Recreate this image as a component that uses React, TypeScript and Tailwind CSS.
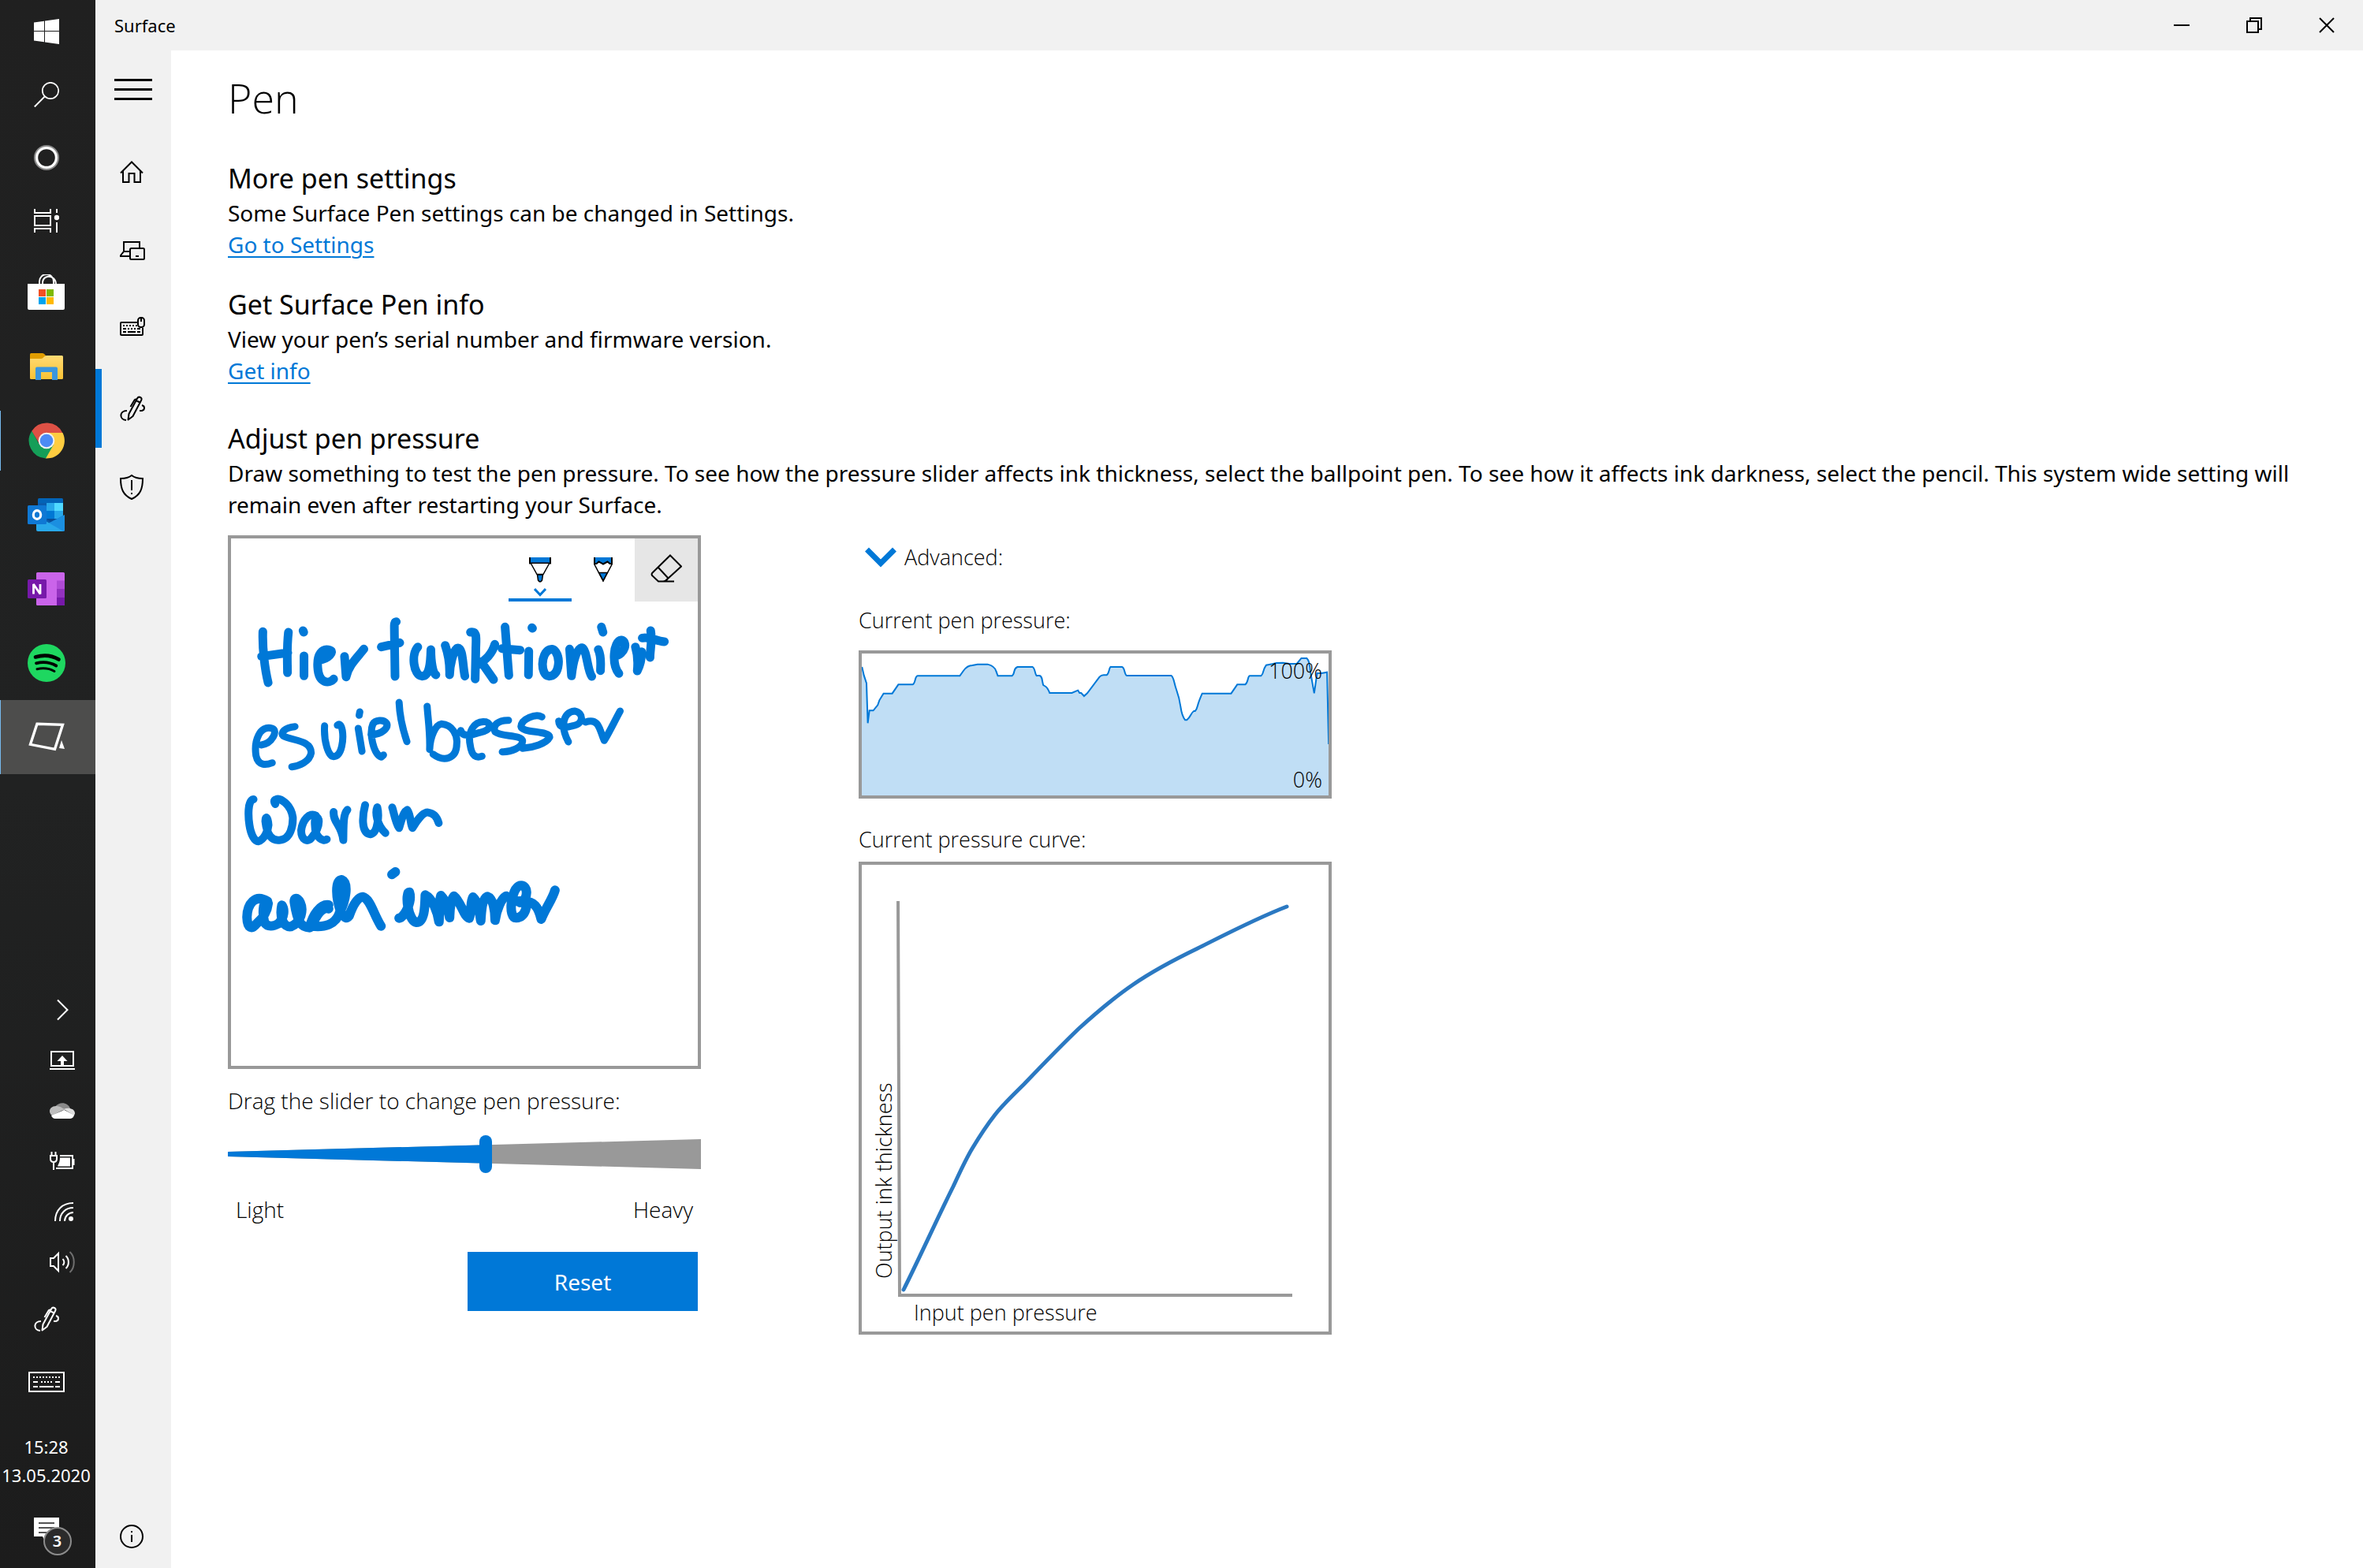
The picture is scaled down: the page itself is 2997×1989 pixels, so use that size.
import { useState } from "react";
import type { ReactNode } from "react";

type IconProps = {
  w: number;
  h: number;
  children: ReactNode;
};

function Icon({ w, h, children }: IconProps) {
  return (
    <svg
      width={w}
      height={h}
      viewBox={`0 0 ${w} ${h}`}
      fill="none"
      stroke="currentColor"
      strokeWidth={2}
      aria-hidden="true"
    >
      {children}
    </svg>
  );
}

/* ---------- Taskbar icons ---------- */

const WindowsIcon = () => (
  <Icon w={32} h={32}>
    <path
      stroke="none"
      fill="currentColor"
      d="M0 4.6 13 2.7V15H0zM14 2.5 32 0V15H14zM0 16H13V29.3L0 27.6zM14 16H32V32L14 29.5z"
    />
  </Icon>
);

const SearchIcon = () => (
  <Icon w={32} h={32}>
    <circle cx="21" cy="11" r="10.2" strokeWidth="1.7" />
    <path d="M13.8 18.4 0.8 31.4" />
  </Icon>
);

const CortanaIcon = () => (
  <Icon w={32} h={32}>
    <circle cx="16" cy="16" r="14.8" stroke="#8b8b8b" strokeWidth="2.4" />
    <circle cx="16" cy="16" r="12.4" strokeWidth="3.2" />
  </Icon>
);

const TaskViewIcon = () => (
  <Icon w={32} h={30}>
    <path d="M1 0V5H21V0M1 9H21V21H1zM1 30V25H21V30M29 0V5M29 17V30" />
    <circle cx="29" cy="11" r="3.2" fill="currentColor" stroke="none" />
  </Icon>
);

const StoreIcon = () => (
  <Icon w={48} h={46}>
    <path d="M15 13V9a8 8 0 0 1 18 0v4M19 13v-3a8 8 0 0 1 6-7c6-1 11 3 11 10" />
    <path stroke="none" fill="#fff" d="M0 12H47V43a2 2 0 0 1-2 2H2a2 2 0 0 1-2-2z" />
    <path stroke="none" fill="#f25022" d="M14 19h9v9h-9z" />
    <path stroke="none" fill="#7fba00" d="M24 19h9v9h-9z" />
    <path stroke="none" fill="#00a4ef" d="M14 29h9v9h-9z" />
    <path stroke="none" fill="#ffb900" d="M24 29h9v9h-9z" />
  </Icon>
);

const FolderIcon = () => (
  <Icon w={42} h={35}>
    <defs>
      <linearGradient id="folder" x1="0" y1="0" x2="0" y2="1">
        <stop offset="0" stopColor="#ffdb74" />
        <stop offset="1" stopColor="#f9c234" />
      </linearGradient>
    </defs>
    <path stroke="none" fill="#e09d00" d="M0 1.5Q0 0 1.5 0H16q2 0 3.5 2.500L21 5 15 10H0z" />
    <path
      stroke="none"
      fill="url(#folder)"
      d="M0 7H14c3 0 4-4 7-4H40.500Q42 3 42 4.500V31.500Q42 33 40.500 33H1.500Q0 33 0 31.500z"
    />
    <path
      stroke="none"
      fill="#3a96dd"
      d="M7 34V19.500Q7 17.500 9 17.500H33Q35 17.500 35 19.500V34H28V24H14V34z"
    />
  </Icon>
);

const ChromeIcon = () => (
  <Icon w={46} h={46}>
    <path stroke="none" fill="#ffcd40" d="M23 23V13H43.500A22.500 22.500 0 0 1 22 45.500z" />
    <path stroke="none" fill="#159e58" d="M23 23 32 28 22 45.500A22.500 22.500 0 0 1 4.500 10.500L14 28z" />
    <path stroke="none" fill="#de5145" d="M23 13H43.300A22.500 22.500 0 0 0 4.300 10.700L14 27z" />
    <circle cx="23" cy="23" r="10.300" stroke="none" fill="#f1f1f1" />
    <circle cx="23" cy="23" r="8.300" stroke="none" fill="#4c8bf5" />
  </Icon>
);

const OutlookIcon = () => (
  <Icon w={48} h={42}>
    <rect x="13" width="32" height="30" rx="1.500" stroke="none" fill="#0364b8" />
    <path stroke="none" fill="#0a5cad" d="M13 6H45V26L30 32 13 28z" />
    <path stroke="none" fill="#28a8ea" d="M24 6H34V16H24z" />
    <path stroke="none" fill="#50d9ff" d="M34 6H45V16H34z" />
    <path stroke="none" fill="#0078d4" d="M24 16H34V26H24z" />
    <path stroke="none" fill="#28a8ea" d="M34 16H45V22L38 26H34z" />
    <path stroke="none" fill="#0a4d96" d="M24 26H38L30 31z" />
    <path stroke="none" fill="#1b8fe0" d="M47 21V40.500Q47 42 45.500 42H26L24 33z" />
    <path stroke="none" fill="#28a8ea" d="M11 22 45.500 42H13Q11 42 11 40z" />
    <rect y="9" width="24" height="24" rx="1.500" stroke="none" fill="#0f78d4" />
    <ellipse cx="12" cy="21" rx="4.700" ry="5.400" strokeWidth="3.200" />
  </Icon>
);

const OneNoteIcon = () => (
  <Icon w={48} h={42}>
    <rect x="11" width="36" height="42" rx="1.500" stroke="none" fill="#ca64ea" />
    <path stroke="none" fill="#ae4bd5" d="M37 10.500H47V21H37z" />
    <path stroke="none" fill="#9332bf" d="M37 21H47V31.500H37z" />
    <path stroke="none" fill="#7719aa" d="M37 31.500H47V40.500Q47 42 45.500 42H37z" />
    <rect y="9" width="24" height="24" rx="1.500" stroke="none" fill="#7719aa" />
    <path strokeWidth="2.800" d="M7.500 27.500V15L16 27.500V15" strokeLinejoin="bevel" />
  </Icon>
);

const SpotifyIcon = () => (
  <Icon w={48} h={48}>
    <circle cx="24" cy="24" r="24" stroke="none" fill="#1ed760" />
    <g stroke="#000" strokeLinecap="round">
      <path strokeWidth="4.600" d="M10 16.500C20 13.500 31 14.500 39.500 19.500" />
      <path strokeWidth="3.800" d="M11 24.300C20 22 28.500 23 36.300 27.500" />
      <path strokeWidth="3" d="M12 31.700C20 30 27 30.500 34 34.500" />
    </g>
  </Icon>
);

const SurfaceIcon = () => (
  <Icon w={48} h={38}>
    <path strokeWidth="3.400" d="M12 2.300 44.500 3.300 34.500 34.300 3.500 28.300z" />
    <path stroke="none" fill="currentColor" d="M43 23 47 34 40 33z" />
  </Icon>
);

const ChevronRightIcon = () => (
  <Icon w={32} h={28}>
    <path d="M10 1.500 22.500 14 10 26.500" />
  </Icon>
);

const LaptopIcon = () => (
  <Icon w={32} h={24}>
    <path d="M2 1H30V19H2zM0 23H32" />
    <path stroke="none" fill="currentColor" d="M16 6 22.500 13H18V18H14V13H9.500z" />
  </Icon>
);

const CloudIcon = () => (
  <Icon w={32} h={20}>
    <path stroke="none" fill="#8a8a8a" d="M7 5C12-2 23-1 26 7L17 10z" />
    <path stroke="none" fill="#bdbdbd" d="M5 17C-3 14-1 4 8 4c4-.5 7 2 11 4L3 16z" />
    <path stroke="none" fill="#dedede" d="M18 8c5-2.500 14-1 14 5.500L31 16z" />
    <path stroke="none" fill="#fff" d="M2 16 18.500 9 31 15.500C30 19 28 20 25 20H7Q3.500 20 2 16z" />
  </Icon>
);

const BatteryIcon = () => (
  <Icon w={32} h={24}>
    <path d="M13 5H29V21H8M30.500 9V17" />
    <path stroke="none" fill="currentColor" d="M13 7.500H26V18.500H10C11 16 13 13 13 7.500z" />
    <path d="M2.500 0V5M7.500 0V5M1 5H9V9Q9 13 5 13T1 9zM5 13V23" />
  </Icon>
);

const WifiIcon = () => (
  <Icon w={32} h={26}>
    <path d="M7 25C7 11 16 2 30 2M13 25C13 15 20 8 30 8M19 25C19 19 24 14 30 14" />
    <circle cx="27" cy="22" r="3" stroke="none" fill="currentColor" />
  </Icon>
);

const SpeakerIcon = () => (
  <Icon w={32} h={28}>
    <path d="M1 9H5L11 3V25L5 19H1z" />
    <path d="M16.500 10C19 12 19 16 16.500 18M20.500 6C25 10 25 18 20.500 22" />
    <path stroke="#6f6f6f" d="M25.500 1C32.500 7 32.500 21 25.500 27" />
  </Icon>
);

const PenWorkspaceIcon = () => (
  <Icon w={32} h={32}>
    <path d="M8 31C-1 30-1 19 9 19M25 19H28C32 18 32 13 28 12" />
    <path strokeLinejoin="round" d="M10.500 30.500 11.500 23 22 3.500Q23.500 0.800 26 2T27 6L16.500 26zM20.500 6 25.500 8.500" />
    <path d="M13.500 14 18.500 5.500Q20 4 22 5" />
  </Icon>
);

const KeyboardIcon = () => (
  <Icon w={46} h={26}>
    <path d="M1 1H45V25H1z" />
    <path d="M6 7H40" strokeDasharray="2 2" />
    <path d="M6 13H12M16 13h2M20 13h2M24 13h2M28 13h2M34 13H40M6 19H12M14 19H32M34 19H40" />
  </Icon>
);

const NotificationIcon = () => (
  <Icon w={32} h={32}>
    <path stroke="none" fill="currentColor" d="M0 0H32V24H19L14 30 11 24H0z" />
    <path stroke="#1d1d1d" strokeWidth="1.500" d="M6 7H26M6 13H26M6 19H20" />
  </Icon>
);

/* ---------- App navigation icons ---------- */

const HomeIcon = () => (
  <Icon w={30} h={28}>
    <path d="M1 15.500 15 1.500 29 15.500M4 13V27H11.500V16H18.500V27H26V13" />
  </Icon>
);

const DevicesIcon = () => (
  <Icon w={32} h={24}>
    <path d="M5 12V1H25V8M12 13H5L1 18V19H12M20 19h4" />
    <rect x="13" y="9" width="18" height="14" rx="1.500" />
  </Icon>
);

const InputDevicesIcon = () => (
  <Icon w={32} h={32}>
    <path d="M22 7H2Q1 7 1 8V22Q1 23 2 23H28Q29 23 29 22V14" />
    <path d="M4 11H22" strokeDasharray="2 2" />
    <path d="M4 15H8M10 15h2M14 15h2M18 15h2M22 15H26M4 19H8M10 19H20M22 19H26" />
    <rect x="23" y="1" width="8" height="12" rx="3.500" />
    <path d="M27 1V6" />
  </Icon>
);

const ShieldIcon = () => (
  <Icon w={30} h={32}>
    <path d="M15 1C12 3.500 7 5 1 5C1 18 4 26 15 31C26 26 29 18 29 5C23 5 18 3.500 15 1zM15 7V20M15 23V25" />
  </Icon>
);

const InfoIcon = () => (
  <Icon w={30} h={30}>
    <circle cx="15" cy="15" r="14" />
    <path d="M15 8V10M15 13V22" />
  </Icon>
);

/* ---------- Taskbar ---------- */

const systemButtons = [
  { label: "Start", icon: <WindowsIcon /> },
  { label: "Search", icon: <SearchIcon /> },
  { label: "Cortana", icon: <CortanaIcon /> },
  { label: "Task View", icon: <TaskViewIcon /> },
];

const pinnedApps = [
  { label: "Microsoft Store", icon: <StoreIcon />, state: "closed" },
  { label: "File Explorer", icon: <FolderIcon />, state: "closed" },
  { label: "Google Chrome", icon: <ChromeIcon />, state: "running" },
  { label: "Outlook", icon: <OutlookIcon />, state: "closed" },
  { label: "OneNote", icon: <OneNoteIcon />, state: "closed" },
  { label: "Spotify", icon: <SpotifyIcon />, state: "closed" },
  { label: "Surface", icon: <SurfaceIcon />, state: "active" },
];

const trayIcons = [
  { label: "Show hidden icons", icon: <ChevronRightIcon /> },
  { label: "Project", icon: <LaptopIcon /> },
  { label: "OneDrive", icon: <CloudIcon /> },
  { label: "Battery", icon: <BatteryIcon /> },
  { label: "Network", icon: <WifiIcon /> },
  { label: "Volume", icon: <SpeakerIcon /> },
];

function Taskbar() {
  return (
    <aside className="flex w-[121px] shrink-0 flex-col bg-linear-to-b from-[#202020] via-[#212222] to-[#1c1c1c] text-white">
      {systemButtons.map(({ label, icon }) => (
        <button key={label} aria-label={label} className="flex h-20 items-center justify-center pr-1">
          {icon}
        </button>
      ))}
      <div className="mt-1 flex flex-col">
        {pinnedApps.map(({ label, icon, state }) => (
          <button
            key={label}
            aria-label={label}
            className={`flex h-[94px] items-center justify-center pr-1 ${
              state === "active" ? "bg-[#4d4d4c]" : ""
            }`}
          >
            {state !== "closed" && (
              <span
                className={`-mr-px w-px bg-[#76b9ed] ${
                  state === "active" ? "h-full" : "h-[76px]"
                }`}
              />
            )}
            <span className="flex flex-1 justify-center">{icon}</span>
          </button>
        ))}
      </div>

      <div className="mt-auto flex flex-col">
        {trayIcons.map(({ label, icon }) => (
          <button key={label} aria-label={label} className="flex h-16 items-center justify-end pr-[26px]">
            {icon}
          </button>
        ))}
        <button aria-label="Windows Ink Workspace" className="flex h-20 items-center justify-center pr-1">
          <PenWorkspaceIcon />
        </button>
        <button aria-label="Touch keyboard" className="flex h-20 items-center justify-center pr-1">
          <KeyboardIcon />
        </button>
        <button className="mt-6 flex flex-col items-center pr-1 text-[22px] leading-9">
          <span>15:28</span>
          <span>13.05.2020</span>
        </button>
        <button aria-label="3 new notifications" className="mt-1 flex h-24 items-center justify-center pr-1">
          <span className="relative">
            <NotificationIcon />
            <span className="absolute top-3 left-3 flex size-9 items-center justify-center rounded-full border-2 border-[#8c8c8c] bg-[#2b2b2b] text-xl font-semibold">
              3
            </span>
          </span>
        </button>
      </div>
    </aside>
  );
}

/* ---------- Surface app chrome ---------- */

function TitleBar() {
  return (
    <header className="flex h-16 items-center justify-between bg-[#f1f1f1] pl-6">
      <span className="text-[22px]">Surface</span>
      <div className="flex h-full">
        <button aria-label="Minimize" className="flex w-23 items-center justify-center">
          <Icon w={20} h={20}>
            <path d="M0 10H20" />
          </Icon>
        </button>
        <button aria-label="Restore" className="flex w-23 items-center justify-center">
          <Icon w={20} h={20}>
            <path d="M1 5H15V19H1zM5 5V1H19V15H15" />
          </Icon>
        </button>
        <button aria-label="Close" className="flex w-23 items-center justify-center">
          <Icon w={20} h={20}>
            <path d="M1 1 19 19M19 1 1 19" />
          </Icon>
        </button>
      </div>
    </header>
  );
}

const pages = [
  { label: "Home", icon: <HomeIcon /> },
  { label: "Devices", icon: <DevicesIcon /> },
  { label: "Keyboard and mouse", icon: <InputDevicesIcon /> },
  { label: "Pen", icon: <PenWorkspaceIcon /> },
  { label: "Warranty", icon: <ShieldIcon /> },
];

function NavRail() {
  return (
    <nav className="flex w-24 shrink-0 flex-col bg-[#f1f1f1]">
      <button aria-label="Menu" className="flex h-26 flex-col items-center justify-center gap-[9px] pb-1.5">
        <span className="h-[3px] w-12 bg-black" />
        <span className="h-[3px] w-12 bg-black" />
        <span className="h-[3px] w-12 bg-black" />
      </button>
      {pages.map(({ label, icon }) => (
        <button
          key={label}
          aria-label={label}
          aria-current={label === "Pen" ? "page" : undefined}
          className={`flex h-25 items-center border-l-8 pl-[23px] ${
            label === "Pen" ? "border-[#0078d7]" : "border-transparent"
          }`}
        >
          {icon}
        </button>
      ))}
      <button aria-label="About" className="mt-auto flex h-20 items-center pl-[31px]">
        <InfoIcon />
      </button>
    </nav>
  );
}

/* ---------- Ink test area ---------- */

const BallpointIcon = () => (
  <Icon w={28} h={32}>
    <path fill="#0078d7" d="M1 0V7.500H27V0" />
    <path fill="#fff" d="M2.500 8 10 21.500H18L25.500 8" strokeWidth="1.500" />
    <path fill="#0078d7" d="M10.500 22 11.500 29Q14 33 16.500 29L17.500 22z" strokeWidth="1.500" />
  </Icon>
);

const PencilIcon = () => (
  <Icon w={24} h={32}>
    <path fill="#fff" d="M1 0V9L12 30 23 9V0" strokeWidth="1.500" />
    <path fill="#0078d7" stroke="none" d="M1 0V7.500L3 8 6.500 5.500 12 8.500 17.500 5.500 21 8 23 7.500V0z" />
    <path d="M1 0V8L3.500 8 6.500 5.500 12 8.500 17.500 5.500 20.500 8 23 8V0" />
    <path fill="#0078d7" d="M6.800 19.500H17.200L12 29.500z" strokeWidth="1.500" />
  </Icon>
);

const EraserIcon = () => (
  <Icon w={40} h={36}>
    <path d="M25 1.500 39 15.500 22 31Q19 34.500 16 34.500H10L2 27Q1 25 2.500 23.500zM10 17 23 31M10 34.500H30" />
  </Icon>
);

// Recorded ink, one entry per handwritten line
const inkLines = [
  {
    width: 11,
    transform: "translate(-13 -93) scale(0.3954 0.3333)",
    d: "M135 394C133 460 142 540 152 588M217 396C211 460 214 520 214 550M131 488 215 474M267 486 267 562M264 390 266 396M316 502C345 498 366 470 350 464C325 455 308 480 311 530C314 595 350 592 362 574M397 488 402 566C410 520 440 490 459 460M563 356C555 357 557 370 557 400L559 564M515 452 574 436M632 452C610 480 618 560 645 563C670 565 673 510 674 462C674 510 680 550 690 558M720 446C730 480 735 520 734 558C735 520 745 470 758 457C778 450 775 520 783 563M801 396C825 392 818 420 818 470L816 574M879 442C870 480 850 500 825 520M835 508 875 576M912 376 924 560M902 458 960 464M988 468 987 558M998 379 1000 381M1055 462C1025 475 1025 560 1052 563C1085 565 1090 500 1075 472C1068 458 1058 458 1050 466M1119 460 1125 562C1130 510 1140 460 1158 455C1175 460 1175 540 1190 564M1211 462C1222 490 1218 520 1218 542M1221 376 1226 396M1262 487C1300 480 1305 430 1285 426C1258 430 1254 520 1277 553M1330 452C1340 490 1338 520 1336 543C1350 510 1350 480 1350 470M1379 390C1385 430 1376 470 1377 492M1352 418C1380 412 1395 430 1423 432",
  },
  {
    width: 9,
    transform: "translate(-13 117) scale(0.3954 0.3333)",
    d: "M130 195C165 190 185 140 165 132C125 118 106 180 113 235C120 275 145 272 165 263M238 125C205 128 190 150 200 160C230 180 290 175 290 225C285 260 250 275 228 278M333 122C330 180 345 240 362 239C390 238 394 170 390 140C386 115 380 114 374 120M441 132 453 219M446 69 444 82M482 155C520 155 538 128 532 112C522 96 495 100 488 115C475 150 490 230 515 241L522 233M572 33C574 90 585 140 597 182M662 48C665 100 672 150 670 212C672 160 690 118 707 115C745 118 760 160 757 190C757 250 715 260 681 230M770 140C775 165 800 160 830 148C865 140 872 115 850 107C810 100 792 150 800 195C805 240 820 245 838 238M923 101C890 100 870 120 880 145C900 165 965 155 968 180C968 205 930 222 903 221M1030 88C1010 75 965 95 963 125C965 150 1055 140 1055 165C1045 190 1000 205 968 208M1084 104C1085 135 1110 128 1130 122C1165 115 1165 72 1135 66C1095 70 1090 130 1115 183M1170 108C1215 90 1215 140 1230 178C1245 150 1265 100 1281 66",
  },
  {
    width: 10,
    transform: "translate(-13 117) scale(0.3954 0.3333)",
    d: "M105 402C85 405 88 470 92 500C97 540 110 562 120 562C140 555 152 520 153 500C151 465 143 465 143 485C148 540 165 560 188 557C225 555 232 500 231 470C225 420 190 395 178 402C168 405 172 415 175 420M305 464C285 450 262 480 258 520C258 560 280 565 290 550C312 520 316 500 314 480C308 460 300 470 302 500C302 550 330 565 340 554M362 450C360 490 388 500 393 557C394 500 392 460 406 442M463 424C455 460 448 530 480 535C505 530 508 460 502 432C495 450 500 500 528 530M550 433C555 450 560 490 572 511C580 480 585 450 598 442C610 460 608 500 615 511C630 480 650 450 665 452C685 455 695 475 699 492",
  },
  {
    width: 12,
    transform: "translate(-13 117) scale(0.3954 0.3333)",
    d: "M150 790C110 760 85 800 84 850C85 895 100 898 115 875C140 850 150 820 152 798C138 770 132 830 140 870C150 890 170 885 185 875C205 850 205 820 196 805C188 850 200 890 225 886C260 870 265 820 255 795C245 772 232 775 237 800C245 860 255 890 285 890C295 840 320 800 346 804M346 818C320 810 300 860 292 884C330 890 370 880 382 830C400 790 412 720 388 708C365 712 370 780 385 830C400 860 405 855 412 845C425 800 440 775 455 773C480 780 490 840 514 884M549 688 560 678M572 854C590 850 615 790 605 755C590 755 600 865 628 870C655 870 655 800 656 766C680 780 695 830 700 868C702 830 700 790 706 768C725 790 730 830 734 852C735 820 735 790 748 770C770 790 780 850 797 854C805 830 800 790 809 774C825 790 830 830 834 864C836 820 840 780 855 772C875 780 880 830 880 862C885 820 900 780 915 770M960 795C990 780 985 725 960 730C930 740 920 855 948 853C980 850 985 800 978 780M950 790C1010 780 1020 820 1028 858C1040 820 1065 780 1072 748",
  },
];

function InkCanvas() {
  return (
    <div className="border-4 border-[#999]">
      <div className="flex justify-end">
        <button aria-label="Ballpoint pen" aria-pressed="true" className="flex size-20 flex-col items-center border-b-4 border-[#0078d7] pt-6">
          <BallpointIcon />
          <svg width="16" height="12" viewBox="0 0 16 12" fill="none" stroke="#0078d7" strokeWidth="3" className="mt-1.5">
            <path d="M1 2 8 9.500 15 2" />
          </svg>
        </button>
        <button aria-label="Pencil" className="flex size-20 justify-center pt-6">
          <PencilIcon />
        </button>
        <button aria-label="Erase all ink" className="flex size-20 justify-center bg-[#e6e6e6] pt-5">
          <EraserIcon />
        </button>
      </div>
      <svg
        viewBox="0 0 592 589"
        className="w-full"
        fill="none"
        stroke="#0078d7"
        strokeLinecap="round"
        strokeLinejoin="round"
        role="img"
        aria-label="Hier funktioniert es viel besser warum auch immer"
      >
        {inkLines.map(({ d, width, transform }, index) => (
          <path key={index} d={d} transform={transform} strokeWidth={width} vectorEffect="non-scaling-stroke" />
        ))}
      </svg>
    </div>
  );
}

function PressureSlider() {
  const [pressure, setPressure] = useState(6);
  const split = 8 + (pressure / 11) * 584;

  return (
    <div className="mt-5 flex flex-col">
      <label htmlFor="pressure" className="font-['Open_Sans',sans-serif] font-light">
        Drag the slider to change pen pressure:
      </label>
      <div className="relative mt-6 h-12">
        <svg viewBox="0 0 600 48" preserveAspectRatio="none" className="h-full w-full">
          <defs>
            <clipPath id="wedge">
              <path d="M0 21 600 5V43L0 27z" />
            </clipPath>
          </defs>
          <g clipPath="url(#wedge)">
            <rect width="600" height="48" fill="#999" />
            <rect width={split} height="48" fill="#0078d7" />
          </g>
        </svg>
        <input
          id="pressure"
          type="range"
          min={0}
          max={11}
          value={pressure}
          onChange={(event) => setPressure(Number(event.target.value))}
          className="absolute inset-0 m-0 h-12 w-full appearance-none bg-transparent [&::-webkit-slider-thumb]:h-12 [&::-webkit-slider-thumb]:w-4 [&::-webkit-slider-thumb]:appearance-none [&::-webkit-slider-thumb]:rounded-full [&::-webkit-slider-thumb]:bg-[#0078d7]"
        />
      </div>
      <div className="mt-6.5 flex justify-between px-2.5 font-['Open_Sans',sans-serif] font-light">
        <span>Light</span>
        <span>Heavy</span>
      </div>
      <button
        onClick={() => setPressure(6)}
        className="mt-[34px] mr-1 h-[75px] w-[292px] self-end bg-[#0078d7] text-white"
      >
        Reset
      </button>
    </div>
  );
}

/* ---------- Advanced ---------- */

const history =
  "M57 528 63 560 71 590 75 742 80 694H92L106 673 111 655 124 629H151L170 595H214Q219 593 222 578T230 562H361L372 543Q384 522 400 522L416 518H447Q470 525 474 545L479 562H523Q528 558 530 545T540 528H587Q592 532 595 548T602 561H609Q616 565 617 580L620 597 628 603Q634 608 640 627H709L728 617 733 627H738L747 639 757 628 795 566Q800 559 808 559H817Q822 555 825 540T831 528H865Q870 530 873 545T880 561H1018Q1023 565 1027 585T1034 615Q1043 645 1047 680T1061 730H1066Q1073 724 1078 712T1088 696H1092Q1097 690 1100 675T1114 629H1204L1223 595H1248Q1253 590 1256 575T1263 562H1297Q1302 557 1304 545T1313 521L1332 517 1345 513 1365 512 1385 516H1408L1422 495H1439Q1448 505 1450 545L1462 628 1471 552H1485L1502 548 1507 822";

function PressureHistory() {
  return (
    <div className="relative mt-[18px] h-[188px] border-4 border-[#999]">
      <svg viewBox="0 0 592 180" preserveAspectRatio="none" className="h-full w-full" fill="none">
        <g transform="translate(-23 -159) scale(0.4082 0.3333)">
          <path fill="#c0def5" d={`${history}V1018H56V528z`} />
          <path stroke="#0078d7" strokeWidth="2" vectorEffect="non-scaling-stroke" d={history} />
        </g>
      </svg>
      <div className="absolute inset-y-0 right-2 flex flex-col justify-between text-right">
        <span className="pt-0.5">100%</span>
        <span>0%</span>
      </div>
    </div>
  );
}

function PressureCurve() {
  return (
    <div className="mt-2 border-4 border-[#999]">
      <svg viewBox="0 0 592 592" className="w-full" fill="none">
        <path stroke="#999" strokeWidth="4" d="M46 46 48 546H546" />
        <path
          stroke="#2b79c2"
          strokeWidth="5"
          strokeLinecap="round"
          d="M53 539C75 495 96 448 116 408C124 391 131 375 140 360C149 345 158 331 169 317C180 303 193 291 206 278C228 255 252 230 275 208C297 188 319 169 344 152C370 134 397 120 426 106C462 88 500 68 539 53"
        />
        <text x="66" y="578" fill="#000" fontSize="27">
          Input pen pressure
        </text>
        <text transform="translate(38 525) rotate(-90)" fill="#000" fontSize="27">
          Output ink thickness
        </text>
      </svg>
    </div>
  );
}

function Advanced() {
  return (
    <section className="w-[600px] font-['Open_Sans',sans-serif] text-[27px] leading-10 font-light">
      <button className="mt-2 flex items-center pl-2">
        <svg width="40" height="26" viewBox="0 0 40 26" fill="none" stroke="#0078d7" strokeWidth="7" aria-hidden="true">
          <path d="M2.500 3 20 20.500 37.500 3" />
        </svg>
        <span className="ml-2.5">Advanced:</span>
      </button>
      <h3 className="mt-10">Current pen pressure:</h3>
      <PressureHistory />
      <h3 className="mt-8">Current pressure curve:</h3>
      <PressureCurve />
    </section>
  );
}

/* ---------- Page ---------- */

function PenPage() {
  return (
    <main className="flex-1 bg-white pt-7 pr-12 pb-10 pl-[72px] text-[28px] leading-10">
      <h1 className="font-['Open_Sans',sans-serif] text-[52px] leading-16 font-[350]">Pen</h1>

      <section className="mt-[46px]">
        <h2 className="text-[34px] leading-12">More pen settings</h2>
        <p>Some Surface Pen settings can be changed in Settings.</p>
        <a href="#settings" className="text-[#0078d7] underline decoration-2 underline-offset-4">
          Go to Settings
        </a>
      </section>

      <section className="mt-8">
        <h2 className="text-[34px] leading-12">Get Surface Pen info</h2>
        <p>View your pen’s serial number and firmware version.</p>
        <a href="#info" className="text-[#0078d7] underline decoration-2 underline-offset-4">
          Get info
        </a>
      </section>

      <section className="mt-[42px]">
        <h2 className="text-[34px] leading-12">Adjust pen pressure</h2>
        <p>
          Draw something to test the pen pressure. To see how the pressure slider affects ink
          thickness, select the ballpoint pen. To see how it affects ink darkness, select the
          pencil. This system wide setting will remain even after restarting your Surface.
        </p>
        <div className="mt-[19px] flex items-start gap-[200px]">
          <div className="w-[600px]">
            <InkCanvas />
            <PressureSlider />
          </div>
          <Advanced />
        </div>
      </section>
    </main>
  );
}

export default function App() {
  return (
    <div className="flex min-h-screen bg-white font-['Noto_Sans',sans-serif] text-black">
      <Taskbar />
      <div className="flex flex-1 flex-col">
        <TitleBar />
        <div className="flex flex-1">
          <NavRail />
          <PenPage />
        </div>
      </div>
    </div>
  );
}
